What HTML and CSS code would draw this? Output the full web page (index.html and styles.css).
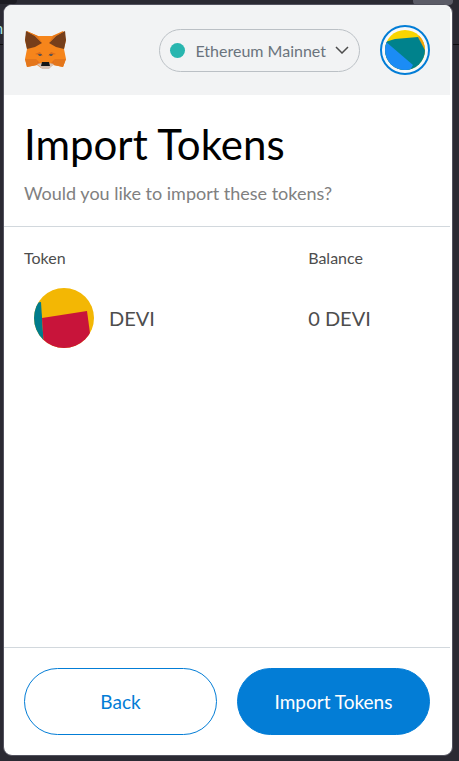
FILE: index.html
```
<!DOCTYPE html>
<html lang="en">
<head>
  <meta charset="UTF-8">
  <meta name="viewport" content="width=device-width, initial-scale=1.0">
  <title>Import Tokens</title>
  <link rel="stylesheet" href="styles.css">
</head>
<body>
  <!-- browser behind the popup -->
  <div class="browser-tab-left"></div>
  <div class="browser-tab-right"></div>
  <div class="browser-line"></div>
  <div class="browser-text" aria-hidden="true">n</div>

  <div class="popup">
    <header class="app-header">
      <svg class="logo" viewBox="0 0 42 40" role="img" aria-label="MetaMask">
        <path fill="#f6851b" d="M3 1 L14 6 H28 L39 1 L42 10 L40 19 L42 29 L39 37 L29 35 L25 38 H17 L13 35 L3 37 L1 29 L3 19 L1 10 Z"/>
        <path fill="#763e1a" d="M2 1 L11 6 L18 13 L11 17 L3 19 L1 10 Z"/>
        <path fill="#763e1a" d="M41 1 L32 6 L25 13 L32 17 L40 19 L42 10 Z"/>
        <path fill="#e2761b" d="M2 1 L14 6 L18 13 L11 6 Z M41 1 L29 6 L25 13 L32 6 Z"/>
        <path fill="#e4761b" d="M1 29 H12 L13 35 L3 37 Z M42 29 H31 L30 35 L39 37 Z"/>
        <path fill="#e2701c" d="M12 29 L17 34 L13 35 Z M31 29 L26 34 L30 35 Z"/>
        <path fill="#d96a1c" d="M11 24 L16 22 L19 26 Z M32 24 L27 22 L24 26 Z"/>
        <path fill="#5b5650" d="M14 24 L18 24 L17 26 L15 26 Z M29 24 L25 24 L26 26 L28 26 Z"/>
        <path fill="#d7c1b3" d="M13 34 L18 33 H25 L30 34 L25 39 H18 Z"/>
        <path fill="#161616" d="M18 32 H25 L26 36 H17 Z"/>
      </svg>

      <button type="button" class="network">
        <span class="network-dot"></span>
        <span class="network-name">Ethereum Mainnet</span>
        <svg class="chevron" viewBox="0 0 14 8"><path d="M1 1 L7 7 L13 1"/></svg>
      </button>

      <button type="button" class="account" aria-label="Account">
        <svg viewBox="0 0 40 40">
          <clipPath id="account-clip"><circle cx="20" cy="20" r="20"/></clipPath>
          <g clip-path="url(#account-clip)">
            <path fill="#f8d500" d="M0 0 H40 V40 H0 Z"/>
            <path fill="#f5a20a" d="M33 7 L40 0 V25 Z"/>
            <path fill="#00828c" d="M0 12 L10 9 L33 7 L42 24 L36 40 H0 Z"/>
            <path fill="#1b8cf5" d="M0 11 L28 35 L24 42 H0 Z"/>
          </g>
        </svg>
      </button>
    </header>

    <div class="intro">
      <h1>Import Tokens</h1>
      <p>Would you like to import these tokens?</p>
    </div>

    <main class="content">
      <table class="tokens">
        <thead>
          <tr>
            <th class="col-token">Token</th>
            <th>Balance</th>
          </tr>
        </thead>
        <tbody>
          <tr>
            <td>
              <div class="token">
                <svg class="token-icon" viewBox="0 0 60 60">
                  <clipPath id="token-clip"><circle cx="30" cy="30" r="30"/></clipPath>
                  <g clip-path="url(#token-clip)">
                    <path fill="#f3b704" d="M0 0 H60 V60 H0 Z"/>
                    <path fill="#007c8c" d="M0 15 L7 14 L10 60 H0 Z"/>
                    <path fill="#c8143a" d="M8 30 L53 23 L58 60 H10 Z"/>
                  </g>
                </svg>
                <span>DEVI</span>
              </div>
            </td>
            <td>0 DEVI</td>
          </tr>
        </tbody>
      </table>
    </main>

    <footer class="actions">
      <button type="button" class="btn btn-secondary">Back</button>
      <button type="button" class="btn btn-primary">Import Tokens</button>
    </footer>
  </div>
</body>
</html>
```

FILE: styles.css
```
* {
  box-sizing: border-box;
}

body {
  margin: 0;
  padding: 4px 6px 5px 3px;
  height: 100vh;
  display: flex;
  background-color: #2b2a33;
  font-family: Lato, "Liberation Sans", sans-serif;
  position: relative;
  overflow: hidden;
}

/* Browser chrome around the popup */
.browser-tab-left,
.browser-tab-right,
.browser-line,
.browser-text {
  position: absolute;
}

.browser-tab-left {
  top: 0;
  left: 0;
  width: 17px;
  height: 4px;
  background-color: #1c1b22;
  border-radius: 0 0 4px 0;
}

.browser-tab-right {
  top: 0;
  right: 6px;
  width: 40px;
  height: 5px;
  background-color: #5b5b66;
  border-radius: 0 0 4px 4px;
}

.browser-line {
  top: 44px;
  left: 0;
  right: 0;
  height: 1px;
  background-color: #0c0c0d;
}

.browser-text {
  top: 19px;
  left: 0;
  width: 3px;
  overflow: hidden;
  direction: rtl;
  font-size: 15px;
  line-height: 18px;
  color: #a5e8ea;
}

.popup {
  position: relative;
  flex: 1;
  display: flex;
  flex-direction: column;
  padding-right: 2px;
  background-color: #ffffff;
  border: 1px solid #52525e;
  border-radius: 9px;
  overflow: hidden;
}

.app-header {
  display: flex;
  align-items: center;
  height: 90px;
  padding: 0 20px;
  background-color: #f2f3f4;
}

.logo {
  width: 42px;
  height: 40px;
}

.network {
  display: flex;
  align-items: center;
  height: 43px;
  margin-left: auto;
  padding: 0 10px;
  background: none;
  border: 1px solid #bbc0c5;
  border-radius: 22px;
  font-family: inherit;
  font-size: 16px;
  color: #6a737d;
  cursor: pointer;
}

.network-dot {
  width: 15px;
  height: 15px;
  margin-right: 10px;
  border-radius: 50%;
  background-color: #29b6af;
}

.chevron {
  width: 14px;
  height: 8px;
  margin-left: 9px;
  fill: none;
  stroke: #4d4d4d;
  stroke-width: 1.5;
}

.account {
  width: 50px;
  height: 50px;
  margin-left: 20px;
  padding: 3px;
  background-color: #f7f8f9;
  border: 2px solid #037dd6;
  border-radius: 50%;
  cursor: pointer;
}

.account svg {
  display: block;
  width: 40px;
  height: 40px;
}

.intro {
  padding: 20px;
  border-bottom: 1px solid #d2d8dd;
}

.intro h1 {
  margin: 0;
  font-size: 42px;
  font-weight: 400;
  line-height: 58px;
  color: #000000;
}

.intro p {
  margin: 8px 0 0;
  font-size: 18px;
  line-height: 25px;
  color: #808080;
}

.content {
  flex: 1;
  padding: 20px;
}

.tokens {
  width: 100%;
  border-collapse: collapse;
  table-layout: fixed;
  color: #4d4d4d;
}

.tokens th {
  padding: 0 0 20px;
  font-size: 16px;
  font-weight: 400;
  line-height: 21px;
  text-align: left;
}

.tokens .col-token {
  width: 70%;
}

.tokens td {
  padding: 0;
  font-size: 20px;
}

.token {
  display: flex;
  align-items: center;
  gap: 15px;
  padding-left: 10px;
}

.token-icon {
  width: 60px;
  height: 60px;
}

.actions {
  display: flex;
  gap: 20px;
  padding: 20px;
  border-top: 1px solid #d2d8dd;
}

.btn {
  flex: 1;
  height: 67px;
  padding: 0;
  border: 1px solid #037dd6;
  border-radius: 34px;
  font-family: inherit;
  font-size: 19px;
  cursor: pointer;
}

.btn-secondary {
  background-color: #ffffff;
  color: #037dd6;
}

.btn-primary {
  background-color: #037dd6;
  color: #ffffff;
}
```
